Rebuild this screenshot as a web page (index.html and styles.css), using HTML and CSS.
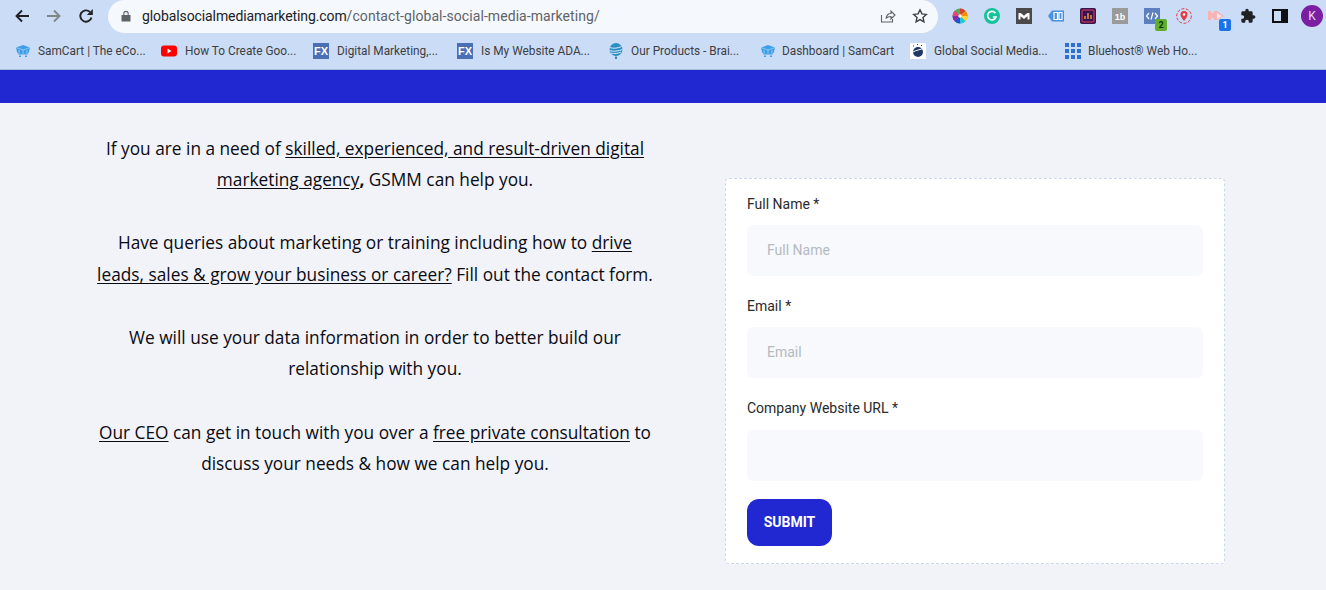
FILE: index.html
```html
<!DOCTYPE html>
<html lang="en">
<head>
<meta charset="utf-8">
<title>Contact</title>
<link rel="stylesheet" href="styles.css">
</head>
<body>
<header class="chrome">
  <div class="toolbar">
    <div class="nav">
      <svg class="nav-icon" viewBox="0 0 16 16"><path d="M15 8H2.500M8 2.500 2.500 8 8 13.500" fill="none" stroke="#202124" stroke-width="1.900"/></svg>
      <svg class="nav-icon" viewBox="0 0 16 16"><path d="M1 8h12.500M8 2.500 13.500 8 8 13.500" fill="none" stroke="#80868b" stroke-width="1.900"/></svg>
      <svg class="nav-icon" viewBox="0 0 16 16"><path d="M13.500 9.500A5.700 5.700 0 1 1 11.900 3.900" fill="none" stroke="#202124" stroke-width="1.900"/><path d="M14.800 1v6H8.800z" fill="#202124"/></svg>
    </div>
    <div class="omnibox">
      <svg class="lock" viewBox="0 0 10 12"><path d="M2.300 5V3.500a2.700 2.700 0 0 1 5.400 0V5H9.500v6.500H.5V5z" fill="#5f6368"/><path d="M3.400 5V3.500a1.600 1.600 0 0 1 3.200 0V5z" fill="#f5f8fd"/></svg>
      <span class="url"><span class="host">globalsocialmediamarketing.com</span><span class="path">/contact-global-social-media-marketing/</span></span>
      <svg class="omni-icon" viewBox="0 0 16 16"><path d="M1.500 7v7h11v-3M6 10.500C6.500 7 9 5.500 11 5.500V3l4 4-4 4V8.500C9 8.500 7 9 6 10.500z" fill="none" stroke="#5f6368" stroke-width="1.100"/></svg>
      <svg class="omni-icon" viewBox="0 0 16 16"><path d="m8 1.800 1.900 4.100 4.400.5-3.300 3 .9 4.400L8 11.600l-3.900 2.200.9-4.400-3.300-3 4.400-.5z" fill="none" stroke="#3c4043" stroke-width="1.400"/></svg>
    </div>
    <div class="extensions">
      <svg class="ext" viewBox="0 0 16 16"><circle cx="8" cy="8" r="7.500" fill="#4caf50"/><path d="M8 8V.5A7.500 7.500 0 0 1 13.300 2.700z" fill="#e53935"/><path d="M8 8 13.300 2.700A7.500 7.500 0 0 1 15.500 8z" fill="#fb8c00"/><path d="M8 8h7.500a7.500 7.500 0 0 1-2.200 5.300z" fill="#fdd835"/><path d="M8 8l5.300 5.300A7.500 7.500 0 0 1 8 15.500z" fill="#26c6da"/><path d="M8 8v7.500a7.500 7.500 0 0 1-5.300-2.200z" fill="#1e50d8"/><path d="M8 8 2.700 13.300A7.500 7.500 0 0 1 .5 8z" fill="#8e24aa"/><path d="M8 8H.5A7.500 7.500 0 0 1 2.700 2.700z" fill="#ec407a"/><circle cx="8" cy="8" r="1.700" fill="#fff"/></svg>
      <svg class="ext" viewBox="0 0 16 16"><circle cx="8" cy="8" r="8" fill="#15c39a"/><path d="M11.500 5.200A4.300 4.300 0 1 0 12 9H8.800" fill="none" stroke="#fff" stroke-width="1.700"/></svg>
      <svg class="ext" viewBox="0 0 16 16"><rect width="16" height="16" fill="#4a4a4a"/><path d="M2.500 11.500V5h2.300L8 7.800 11.200 5h2.300v6.500h-2V8.300L8 11 4.500 8.300v3.200z" fill="#fff"/></svg>
      <svg class="ext" viewBox="0 0 16 16"><path d="M0 8l4-5.500h12v11H4z" fill="#4a90e2"/><path d="M6 4.500h3.500v7H6zM11 4.500h3v7h-3z" fill="none" stroke="#fff" stroke-width="1.200"/></svg>
      <svg class="ext" viewBox="0 0 16 16"><rect width="16" height="16" rx="2" fill="#3a1250"/><rect x="2" y="2" width="12" height="12" rx="1" fill="none" stroke="#e0455a"/><path d="M5 11V8M8 11V5M11 11V7" stroke="#f5a142" stroke-width="1.400"/></svg>
      <svg class="ext" viewBox="0 0 16 16"><rect width="16" height="16" fill="#9a9a9a"/><text class="ext-text" x="8" y="12" text-anchor="middle">1b</text></svg>
      <span class="ext-wrap">
        <svg class="ext" viewBox="0 0 16 16"><rect width="16" height="16" fill="#5b7fbf"/><path d="M5 5 2.500 8 5 11M11 5l2.500 3L11 11M9 4.500 7 11.500" fill="none" stroke="#fff" stroke-width="1.200"/></svg>
        <span class="badge badge-green">2</span>
      </span>
      <svg class="ext" viewBox="0 0 16 16"><circle cx="8" cy="8" r="7.300" fill="none" stroke="#e53945" stroke-dasharray="3 1.500"/><path d="M8 3a3.500 3.500 0 0 1 3.500 3.500C11.500 9 8 13 8 13S4.500 9 4.500 6.500A3.500 3.500 0 0 1 8 3z" fill="#e53945"/><circle cx="8" cy="6.500" r="1.300" fill="#fff"/></svg>
      <span class="ext-wrap">
        <svg class="ext" viewBox="0 0 16 16"><path d="M0 3h3v2h3V3h3l7 5-7 4H6v-2H3v2H0z" fill="#f8b4b4"/><path d="M9 5l5 3-5 3z" fill="#fde8e8"/></svg>
        <span class="badge badge-blue">1</span>
      </span>
      <svg class="ext" viewBox="0 0 24 24"><path d="M20.500 11H19V7c0-1.100-.9-2-2-2h-4V3.500C13 2.120 11.880 1 10.500 1S8 2.120 8 3.500V5H4c-1.100 0-2 .9-2 2v3.800h1.500c1.490 0 2.700 1.210 2.700 2.700s-1.210 2.700-2.700 2.700H2V20c0 1.100.9 2 2 2h3.800v-1.500c0-1.490 1.210-2.700 2.700-2.700 1.490 0 2.700 1.210 2.700 2.700V22H17c1.100 0 2-.9 2-2v-4h1.500c1.380 0 2.500-1.120 2.500-2.500S21.880 11 20.500 11z" fill="#202124"/></svg>
      <svg class="ext" viewBox="0 0 16 16"><rect x="1" y="2" width="14" height="12" fill="none" stroke="#111" stroke-width="2"/><rect x="9" y="2" width="6" height="12" fill="#111"/></svg>
      <span class="avatar">K</span>
    </div>
  </div>
  <div class="bookmarks">
    <span class="bookmark bm-1"><svg class="fav" viewBox="0 0 16 16"><path d="M1 4.500 8 2l7 2.500-1 4.500-1.500 2.500h-9L2 9z" fill="#3f9fe6"/><path d="M1 4.500 8 7l7-2.500M4 7v4M8 7v4M12 7v4" fill="none" stroke="#a9d6f6" stroke-width=".7"/><path d="M4 12.500h2V14H4zM10 12.500h2V14h-2z" fill="#3f9fe6"/></svg><span class="bm-text">SamCart | The eCo...</span></span>
    <span class="bookmark bm-2"><svg class="fav" viewBox="0 0 16 16"><rect y="2.500" width="16" height="11" rx="3" fill="#f00"/><path d="m6.500 5.500 4 2.500-4 2.500z" fill="#fff"/></svg><span class="bm-text">How To Create Goo...</span></span>
    <span class="bookmark bm-3"><span class="fx">FX</span><span class="bm-text">Digital Marketing,...</span></span>
    <span class="bookmark bm-4"><span class="fx">FX</span><span class="bm-text">Is My Website ADA...</span></span>
    <span class="bookmark bm-5"><svg class="fav" viewBox="0 0 16 16"><circle cx="8" cy="6.500" r="6.500" fill="#2a8ec4"/><path d="M1.500 4.500c4 1.500 9 .5 12-1M1.500 7.500c4 1.500 9 .5 13-1M3 10c3 1 7 .5 10-1" fill="none" stroke="#dbe8f8" stroke-width="1"/><path d="M7 13.500h2V16H7z" fill="#2a8ec4"/></svg><span class="bm-text">Our Products - Brai...</span></span>
    <span class="bookmark bm-6"><svg class="fav" viewBox="0 0 16 16"><path d="M1 4.500 8 2l7 2.500-1 4.500-1.500 2.500h-9L2 9z" fill="#3f9fe6"/><path d="M1 4.500 8 7l7-2.500M4 7v4M8 7v4M12 7v4" fill="none" stroke="#a9d6f6" stroke-width=".7"/><path d="M4 12.500h2V14H4zM10 12.500h2V14h-2z" fill="#3f9fe6"/></svg><span class="bm-text">Dashboard | SamCart</span></span>
    <span class="bookmark bm-7"><svg class="fav" viewBox="0 0 16 16"><rect width="16" height="16" fill="#fff"/><circle cx="8" cy="9" r="5" fill="#1f3a68"/><path d="M3 9c3-2 7-2 11-4" fill="none" stroke="#fff"/><path d="M3 3h1M7 1.500h1M11 2.500h1" stroke="#1f3a68"/></svg><span class="bm-text">Global Social Media...</span></span>
    <span class="bookmark bm-8"><svg class="fav" viewBox="0 0 16 16" fill="#2f6fd0"><rect width="4" height="4"/><rect x="6" width="4" height="4"/><rect x="12" width="4" height="4"/><rect y="6" width="4" height="4"/><rect x="6" y="6" width="4" height="4"/><rect x="12" y="6" width="4" height="4"/><rect y="12" width="4" height="4"/><rect x="6" y="12" width="4" height="4"/><rect x="12" y="12" width="4" height="4"/></svg><span class="bm-text">Bluehost® Web Ho...</span></span>
  </div>
</header>
<div class="banner"></div>
<main class="content">
  <section class="copy">
    <p>If you are in a need of <a href="#">skilled, experienced, and result-driven digital marketing agency</a><b>,</b> GSMM can help you.</p>
    <p>Have queries about marketing or training including how to <a href="#">drive leads, sales &amp; grow your business or career?</a> Fill out the contact form.</p>
    <p>We will use your data information in order to better build our relationship with you.</p>
    <p><a href="#">Our CEO</a> can get in touch with you over a <a href="#">free private consultation</a> to discuss your needs &amp; how we can help you.</p>
  </section>
  <form class="card">
    <label class="field"><span class="label">Full Name *</span><input class="input" placeholder="Full Name"></label>
    <label class="field"><span class="label">Email *</span><input class="input" placeholder="Email"></label>
    <label class="field field-last"><span class="label">Company Website URL *</span><input class="input"></label>
    <button class="submit" type="button">SUBMIT</button>
  </form>
</main>
</body>
</html>
```
FILE: styles.css
```css
* { box-sizing: border-box; }
html, body { margin: 0; height: 590px; overflow: hidden; }
body { background: #f1f3f9; font-family: "Open Sans", sans-serif; }

.chrome { background: #cbdcf6; height: 70px; border-bottom: 1px solid #a9bbd6; }
.toolbar { display: flex; height: 33px; align-items: center; }
.nav { display: flex; width: 108px; padding: 0 0 1px 14px; gap: 16px; flex: none; }
.nav-icon { width: 16px; height: 16px; }
.omnibox {
  display: flex; align-items: center; width: 830px; height: 33px; flex: none;
  background: #f5f8fd; border-radius: 17px;
  padding: 0 10px 1px 13px;
}
.lock { width: 10px; height: 12px; flex: none; margin-right: 11px; }
.url { flex: 1; font: 14px/1 "Roboto", sans-serif; color: #5f6368; }
.host { color: #202124; letter-spacing: -.1px; }
.path { letter-spacing: .07px; }
.omni-icon { width: 16px; height: 16px; margin-left: 16px; flex: none; }
.extensions { display: flex; align-items: center; gap: 16px; padding: 0 0 1px 14px; flex: none; }
.ext { width: 16px; height: 16px; display: block; flex: none; }
.ext-text { font: 700 9px "Liberation Sans", sans-serif; fill: #fff; }
.ext-wrap { position: relative; display: block; }
.badge {
  position: absolute; right: -7px; bottom: -7px; width: 12px; height: 12px; border-radius: 2px;
  font: 700 9px/12px "Roboto", sans-serif; text-align: center;
}
.badge-green { background: #5fae2f; color: #10300a; }
.badge-blue { background: #1a73e8; color: #fff; }
.avatar {
  width: 22px; height: 22px; border-radius: 50%; background: #7b1fa2; color: #e8d8f0;
  font: 12px/22px "Roboto", sans-serif; text-align: center; margin-left: -3px;
}

.bookmarks { display: flex; align-items: center; height: 36px; padding-left: 15px; font: 11.850px/1 "Roboto", sans-serif; color: #3c4043; }
.bookmark { display: flex; align-items: center; gap: 7px; flex: none; white-space: nowrap; }
.bm-text { padding-top: 1px; }
.fav { width: 16px; height: 16px; flex: none; }
.fx {
  width: 16px; height: 16px; background: #4a6fb5; color: #fff; flex: none;
  font: 700 11px/16px "Liberation Sans", sans-serif; text-align: center;
}
.bm-1 { width: 146px; }
.bm-2 { width: 152px; gap: 8px; }
.bm-3 { width: 144px; gap: 8px; }
.bm-4 { width: 151px; gap: 8px; }
.bm-5 { width: 152px; }
.bm-6 { width: 150px; gap: 6px; }
.bm-7 { width: 155px; gap: 8px; }

.banner { height: 33px; background: #2128d1; }

.content { display: flex; height: 487px; }
.copy { width: 750px; flex: none; padding: 29.500px 0 0 95px; }
.copy p {
  width: 560px; margin: 0 0 31.500px; text-align: center;
  font-size: 17.270px; line-height: 31.600px; color: #0a0a12;
}
.copy a { color: inherit; text-decoration: underline; text-underline-offset: 2px; }

.card {
  width: 500px; height: 386px; margin: 75px 0 0 -25px; padding: 14px 21px 0;
  background: #fff; border: 1px dashed #c9d8ec; border-radius: 4px; flex: none;
}
.field { display: block; margin-bottom: 19px; }
.label { display: block; font: 14px/22px "Roboto", sans-serif; color: #2a2a2a; margin-bottom: 10px; }
.field-last .label { margin-bottom: 11px; }
.input {
  display: block; width: 100%; height: 51px; border: 0; border-radius: 6px; background: #f7f9fc;
  padding: 0 20px 2px; font: 14px "Roboto", sans-serif; outline: 0;
}
.input::placeholder { color: #b4bac1; opacity: 1; }
.submit {
  display: block; width: 85px; height: 47px; margin-top: -1px; border: 0; border-radius: 12px;
  background: #2128d1; color: #fff; font: 700 14px "Roboto", sans-serif; padding: 0 0 2px;
}
```
